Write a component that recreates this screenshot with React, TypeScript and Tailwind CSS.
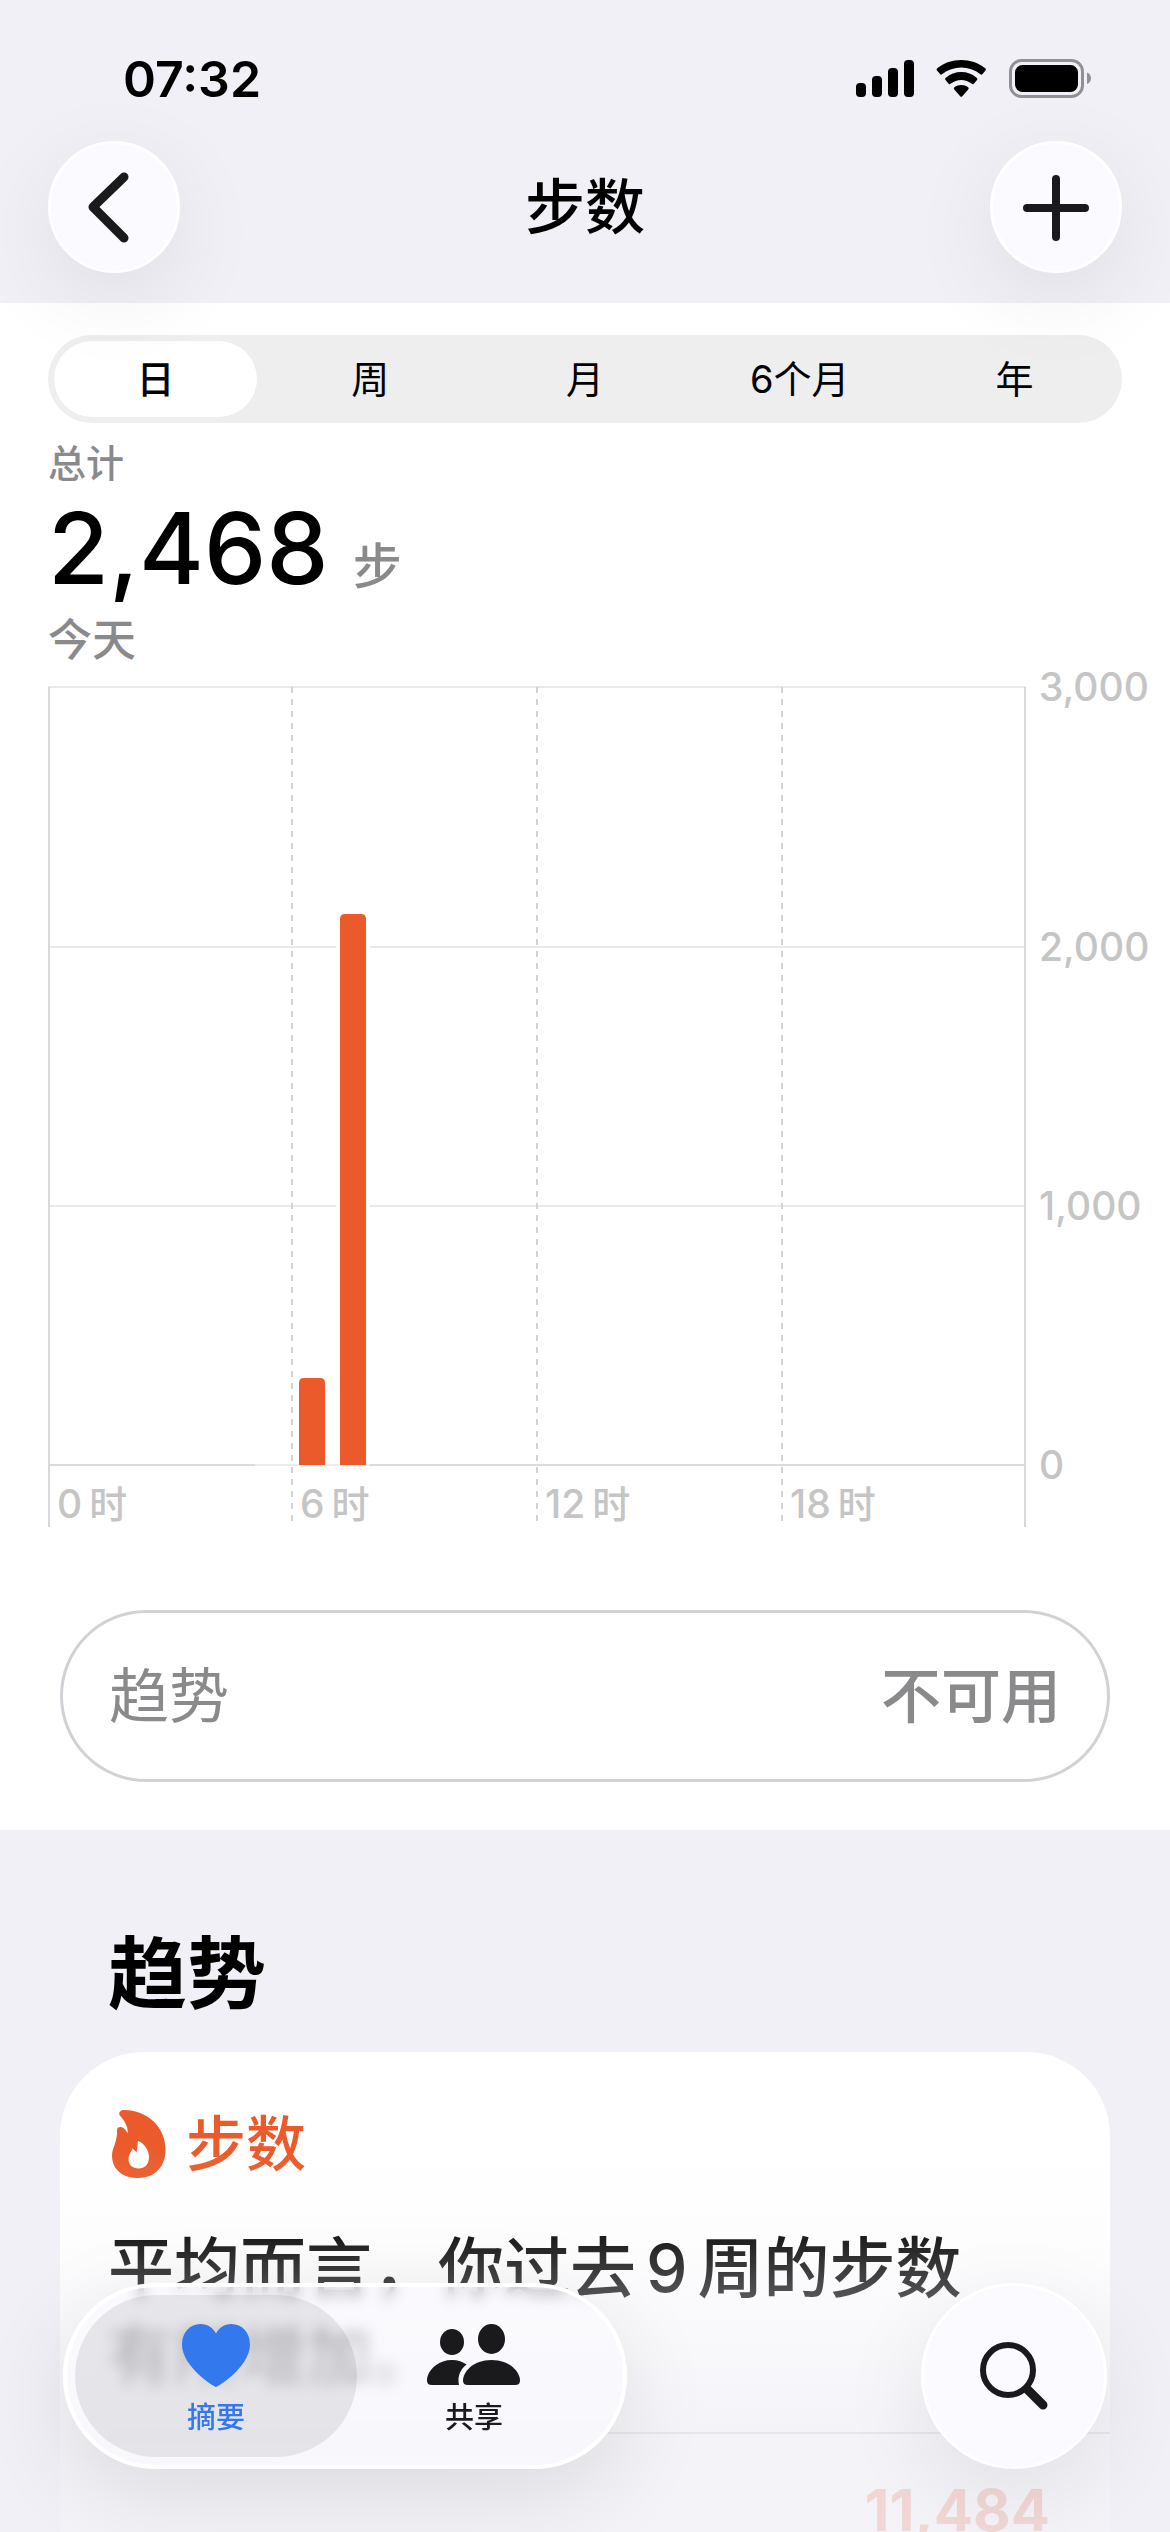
import { useState } from "react";
import clsx from "clsx";

const RANGES = ["日", "周", "月", "6个月", "年"];

const Y_TICKS = [
  { label: "3,000", y: 19 },
  { label: "2,000", y: 279 },
  { label: "1,000", y: 538 },
  { label: "0", y: 797 },
];

const X_TICKS = [
  { hour: "0", x: 1 },
  { hour: "6", x: 244 },
  { hour: "12", x: 489 },
  { hour: "18", x: 734 },
];

const BARS = [
  { hour: 6, x: 251, top: 710 },
  { hour: 7, x: 292, top: 246 },
];

function StatusIcons() {
  return (
    <svg width="236" height="40" viewBox="0 0 236 40" aria-hidden="true">
      <rect x="0" y="24" width="10" height="14" rx="4" />
      <rect x="16" y="17" width="10" height="21" rx="4" />
      <rect x="32" y="9" width="10" height="29" rx="4" />
      <rect x="48" y="1" width="10" height="37" rx="4" />
      <path d="M81 11.500a1.500 1.500 0 0 1 0-2c14-11.300 34.500-11.300 48.500 0a1.500 1.500 0 0 1 0 2l-3 3.600a1.500 1.500 0 0 1-2 .2c-11.400-9-27.200-9-38.500 0a1.500 1.500 0 0 1-2-.2z" />
      <path d="M89.500 21a1.500 1.500 0 0 1 .1-2.100c9-7.800 22.300-7.800 31.300 0a1.500 1.500 0 0 1 .1 2.100l-3.200 3.700a1.500 1.500 0 0 1-2 .1c-6.200-5.100-15-5.100-21.200 0a1.500 1.500 0 0 1-2-.1z" />
      <path d="M98.300 30.500a1.500 1.500 0 0 1 .1-2.200c4-3.200 9.700-3.200 13.700 0a1.500 1.500 0 0 1 .1 2.200l-5.900 6.700a1.500 1.500 0 0 1-2.100 0z" />
      <rect x="154.500" y="1.500" width="72" height="36" rx="11" fill="none" stroke="#919195" strokeWidth="3" />
      <rect x="159" y="6" width="63" height="27" rx="7.500" />
      <path d="M231 13.500c5.300 2 5.300 9.500 0 11.500z" fill="#919195" />
    </svg>
  );
}

function FlameIcon() {
  return (
    <svg width="54" height="68" viewBox="0 0 54 68" fill="#eb5a2a" aria-hidden="true">
      <path
        fillRule="evenodd"
        d="M7.500 5C6.500 2 9 0 12 0C35 0 53.500 17 53.500 39.500C53.500 57 43 68 26 68C10 68 0 59 0 45.500C0 38 5.500 32 5 20.500C4.800 16.500 9.500 16 12.500 19L15.800 23C16.200 16 11.500 9.500 7.500 5ZM26.500 31C25.200 31 26 35 24.600 42.500L20.600 38.200C19.800 41.500 16.500 44 16.500 49C16.500 55 20.500 58.500 26.500 58.500C33 58.500 37 54 37 47C37 39.500 31.500 33 26.500 31Z"
      />
    </svg>
  );
}

function HeartIcon() {
  return (
    <svg width="68" height="64" viewBox="0 0 68 64" fill="#3478ee" aria-hidden="true">
      <path d="M34 63C32.500 63 0 43 0 20.500C0 8.500 8 0 18.500 0C26 0 31 4 34 9.500C37 4 42 0 49.500 0C60 0 68 8.500 68 20.500C68 43 35.500 63 34 63Z" />
    </svg>
  );
}

function PeopleIcon() {
  return (
    <svg width="94" height="64" viewBox="0 0 94 64" fill="#1a1a1d" aria-hidden="true">
      <ellipse cx="25" cy="18" rx="12" ry="13" />
      <ellipse cx="64.500" cy="15" rx="13.500" ry="15" />
      <path d="M25 36C31 36 36 38 39.500 40.500C34 45 30 52 32 61H5C1.500 61 0 59.500 0 56.500C0 48 9.500 36 25 36Z" />
      <path d="M64.500 36C83 36 93 48 93 56.500C93 59.500 91.500 61 88 61H41C37.500 61 36 59.500 36 56.500C36 48 46 36 64.500 36Z" />
    </svg>
  );
}

function StepsChart() {
  return (
    <svg
      viewBox="0 0 1122 862"
      className="block w-full overflow-visible text-[39px] font-medium"
      role="img"
      aria-label="今天每小时步数"
    >
      {Y_TICKS.map(({ label, y }) => (
        <g key={label}>
          <path d={`M0 ${y}H978`} stroke={label === "0" ? "#dbdbdc" : "#e9e9e9"} strokeWidth="2" />
          <text x="991" y={y + 14} fill="#c5c5c5">
            {label}
          </text>
        </g>
      ))}

      <path d="M207 797H322" stroke="#ececec" strokeWidth="2" />
      <path d="M1 19V859M977 19V859" stroke="#d8d8d9" strokeWidth="2" />
      {X_TICKS.map(({ hour, x }) => (
        <g key={hour}>
          {hour !== "0" && (
            <path d={`M${x} 19V859`} stroke="#d3d3d4" strokeWidth="2" strokeDasharray="6 6" />
          )}
          <text x={x + 8} y="850" fill="#c5c5c5">
            {hour}
            <tspan dx="7" className="text-[38px]">时</tspan>
          </text>
        </g>
      ))}

      {BARS.map(({ hour, x, top }) => (
        <g key={hour}>
          <rect x={x - 4} y={top - 4} width="34" height={798 - top} fill="#fff" />
          <path
            d={`M${x} 797V${top + 5}q0 -5 5 -5h16q5 0 5 5V797z`}
            fill="#eb5a2a"
          />
        </g>
      ))}
    </svg>
  );
}

const GLASS =
  "border-3 border-white bg-[#fafaff] shadow-[0_24px_90px_rgba(0,0,0,0.08)]";

export default function App() {
  const [range, setRange] = useState("日");

  return (
    <div
      lang="zh-CN"
      className="relative flex h-screen flex-col overflow-hidden bg-[#f1f0f6] font-[Inter,'Noto_Sans_CJK_SC',sans-serif] text-black"
    >
      <header className="relative z-10 shrink-0 pb-[30px]">
        <div className="flex h-[141px] items-center justify-between pt-4 pr-[78px] pl-[123px]">
          <time className="text-[50px] leading-none font-semibold">07:32</time>
          <StatusIcons />
        </div>
        <div className="flex items-center justify-between px-12">
          <button
            aria-label="返回"
            className={clsx("flex size-[132px] items-center justify-center rounded-full", GLASS)}
          >
            <svg width="132" height="132" viewBox="0 0 132 132" className="shrink-0" aria-hidden="true">
              <path
                d="M76 36L45 66L76 97"
                fill="none"
                stroke="#1a1a1d"
                strokeWidth="9"
                strokeLinecap="round"
                strokeLinejoin="round"
              />
            </svg>
          </button>
          <h1 className="text-[60px] leading-none font-medium">步数</h1>
          <button
            aria-label="添加数据"
            className={clsx("flex size-[132px] items-center justify-center rounded-full", GLASS)}
          >
            <svg width="132" height="132" viewBox="0 0 132 132" className="shrink-0" aria-hidden="true">
              <path d="M37 67H95M66 38V96" stroke="#1a1a1d" strokeWidth="8" strokeLinecap="round" />
            </svg>
          </button>
        </div>
      </header>

      <main className="min-h-0 flex-1">
        <section className="bg-white pt-8 pb-12">
          <div className="mx-12 flex h-[88px] rounded-full bg-[#eeeeee]" role="tablist">
            {RANGES.map((label) => (
              <button
                key={label}
                role="tab"
                aria-selected={range === label}
                onClick={() => setRange(label)}
                className="flex-1 p-1.5 text-[38px] leading-none"
              >
                <span
                  className={clsx(
                    "flex h-full items-center justify-center rounded-full",
                    range === label && "bg-white font-medium"
                  )}
                >
                  {label}
                </span>
              </button>
            ))}
          </div>

          <div className="px-12 pt-4 text-[#8a8a8c]">
            <p className="text-[38px] leading-[48px] font-medium">总计</p>
            <p className="mt-4 flex items-baseline gap-6 leading-[90px]">
              <span className="text-[99px] font-medium text-black">2,468</span>
              <span className="text-[49px] font-medium">步</span>
            </p>
            <p className="text-[44px] leading-[56px] font-medium">今天</p>
          </div>

          <div className="pl-12">
            <StepsChart />
          </div>

          <div className="mx-[60px] mt-20 flex h-[172px] items-center justify-between rounded-full border-3 border-[#d1d1d6] px-[46px] text-[60px] text-[#8a8a8c]">
            <span>趋势</span>
            <span className="font-medium">不可用</span>
          </div>
        </section>

        <section className="px-[60px] pt-24">
          <h2 className="pl-12 text-[79px] leading-[96px] font-bold">趋势</h2>
          <article className="mt-[30px] rounded-t-[84px] bg-white pt-[50px] pl-12">
            <h3 className="flex items-center gap-5 pl-1 text-[60px] leading-[84px] font-medium text-[#eb5a2a]">
              <FlameIcon />
              步数
            </h3>
            <p className="mt-[38px] text-[66px] leading-[88px] font-medium">
              平均而言，你过去<span className="mx-2.5">9</span>周的步数
              <br />
              有所增加。
            </p>
            <div className="mt-8 border-t-2 border-[#c6c6c8] pt-10 pr-[60px] text-right text-[58px] leading-[72px] font-bold text-[#eb5a2a]">
              11,484
            </div>
          </article>
        </section>
      </main>

      {/* Content fades out behind the floating tab bar */}
      <div className="pointer-events-none absolute inset-x-0 bottom-0 h-[392px] bg-[linear-gradient(to_bottom,rgba(241,240,246,0)_0%,rgba(241,240,246,0.12)_25%,rgba(241,240,246,0.35)_40%,rgba(241,240,246,0.5)_55%,rgba(241,240,246,0.82)_80%,rgba(241,240,246,0.84)_100%)]" />

      <footer className="absolute inset-x-0 bottom-0 flex items-center justify-between px-[63px] pb-[63px]">
        <nav className="flex h-[186px] items-center rounded-full border-4 border-white bg-[#fafaff]/60 px-2 shadow-[0_24px_90px_rgba(0,0,0,0.1)] backdrop-blur-[7px]">
          <a
            href="#summary"
            aria-current="page"
            className="flex h-[162px] w-[282px] flex-col items-center rounded-full bg-black/8 pt-[29px] text-[29px] leading-[36px] font-medium text-[#3478ee]"
          >
            <HeartIcon />
            <span className="mt-3">摘要</span>
          </a>
          <a
            href="#sharing"
            className="-ml-6 flex h-[162px] w-[282px] flex-col items-center pt-[29px] text-[29px] leading-[36px] font-medium text-[#1a1a1d]"
          >
            <PeopleIcon />
            <span className="mt-3">共享</span>
          </a>
        </nav>
        <button
          aria-label="搜索"
          className={clsx("flex size-[186px] items-center justify-center rounded-full", GLASS)}
        >
          <svg width="72" height="80" viewBox="0 0 72 80" fill="none" stroke="#1a1a1d" aria-hidden="true">
            <circle cx="30" cy="34" r="25" strokeWidth="6" />
            <path d="M49 53L65 69" strokeWidth="9" strokeLinecap="round" />
          </svg>
        </button>
      </footer>
    </div>
  );
}
